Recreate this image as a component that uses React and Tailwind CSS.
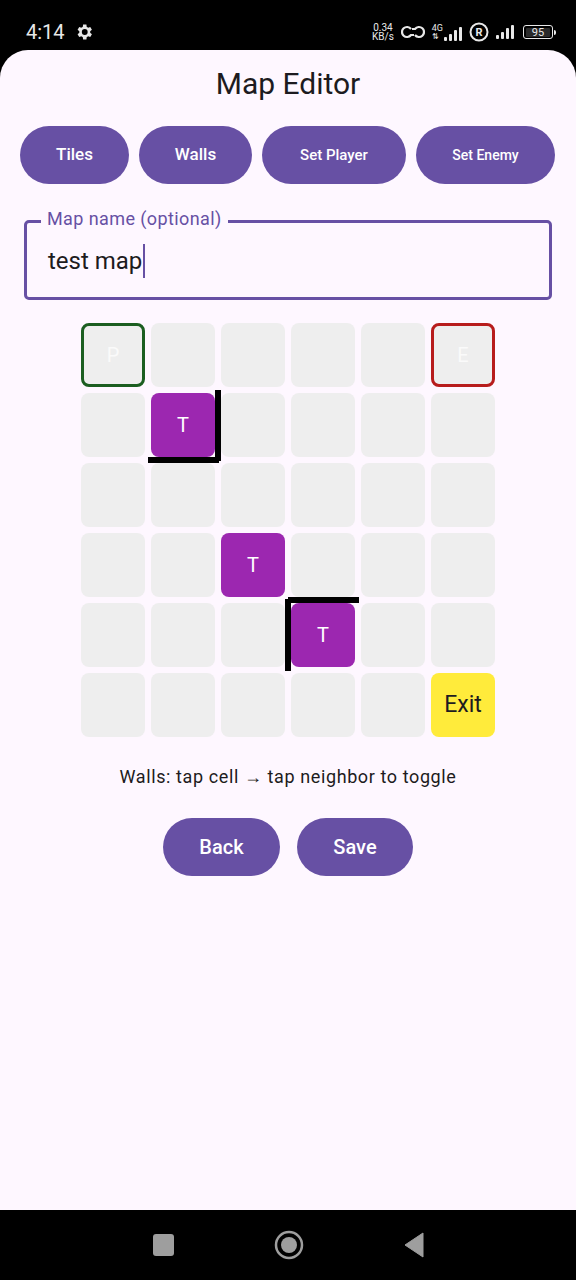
import React from "react";

const ROWS = 6;
const COLS = 6;

const tiles = {
  "0-0": "player",
  "0-5": "enemy",
  "1-1": "trap",
  "3-2": "trap",
  "4-3": "trap",
  "5-5": "exit",
};

// wall bars: left/top in px relative to grid box, 70px step
const walls = [
  { left: 134, top: 67, w: 6, h: 71 },
  { left: 67, top: 134, w: 71, h: 6 },
  { left: 207, top: 274, w: 71, h: 6 },
  { left: 204, top: 276, w: 6, h: 72 },
];

function Cell({ kind }) {
  if (kind === "player")
    return (
      <div className="flex h-16 w-16 items-center justify-center rounded-lg border-[3px] border-[#1b5e20] bg-[#eeeeee] text-[20px] text-[#fafafa]">
        P
      </div>
    );
  if (kind === "enemy")
    return (
      <div className="flex h-16 w-16 items-center justify-center rounded-lg border-[3px] border-[#b71c1c] bg-[#eeeeee] text-[20px] text-[#fafafa]">
        E
      </div>
    );
  if (kind === "trap")
    return (
      <div className="flex h-16 w-16 items-center justify-center rounded-lg bg-[#9c27b0] text-[20px] text-white">
        T
      </div>
    );
  if (kind === "exit")
    return (
      <div className="flex h-16 w-16 items-center justify-center rounded-lg bg-[#ffeb3b] text-[23px] text-[#1d1b20]">
        Exit
      </div>
    );
  return <div className="h-16 w-16 rounded-lg bg-[#eeeeee]" />;
}

function StatusBar() {
  return (
    <div className="flex h-[50px] items-center justify-between bg-black pl-[26px] pr-[20px] pt-[14px] text-[#e8e8e8]">
      <div className="flex items-center gap-[9px]">
        <span className="text-[20px] leading-none">4:14</span>
        <svg width="20" height="20" viewBox="0 0 24 24" fill="#e8e8e8">
          <path d="M19.4 13a7.5 7.5 0 0 0 0-2l2.1-1.6-2-3.5-2.5 1a7.3 7.3 0 0 0-1.7-1L14.9 3h-4l-.4 2.9a7.3 7.3 0 0 0-1.7 1l-2.5-1-2 3.5L6.4 11a7.5 7.5 0 0 0 0 2l-2.1 1.6 2 3.5 2.5-1a7.3 7.3 0 0 0 1.7 1l.4 2.9h4l.4-2.9a7.3 7.3 0 0 0 1.7-1l2.5 1 2-3.5zM12.9 15.5a3.5 3.5 0 1 1 0-7 3.5 3.5 0 0 1 0 7z" />
        </svg>
      </div>
      <div className="flex items-center gap-[7px]">
        <div className="flex flex-col items-center text-[10px] leading-[9px]">
          <span>0.34</span>
          <span>KB/s</span>
        </div>
        <svg width="24" height="16" viewBox="0 0 24 16" fill="none" stroke="#e8e8e8" strokeWidth="2.2">
          <path d="M10 5a5 5 0 1 0 0 6h3" />
          <path d="M14 11a5 5 0 1 0 0-6h-3" />
        </svg>
        <div className="flex items-end gap-[1px]">
          <div className="flex flex-col items-start">
            <span className="text-[9px] leading-[9px]">4G</span>
            <span className="text-[8px] leading-[8px]">⇅</span>
          </div>
          <svg width="18" height="14" viewBox="0 0 18 14" fill="#e8e8e8">
            <rect x="0" y="10" width="3" height="4" rx="1" />
            <rect x="5" y="7" width="3" height="7" rx="1" />
            <rect x="10" y="3" width="3" height="11" rx="1" />
            <rect x="15" y="0" width="3" height="14" rx="1" />
          </svg>
        </div>
        <svg width="20" height="20" viewBox="0 0 20 20" fill="none" stroke="#e8e8e8" strokeWidth="2">
          <circle cx="10" cy="10" r="8.5" />
          <text x="10" y="14" textAnchor="middle" fontSize="11" fontWeight="bold" fill="#e8e8e8" stroke="none" fontFamily="Roboto, sans-serif">R</text>
        </svg>
        <svg width="20" height="14" viewBox="0 0 20 14" fill="#e8e8e8">
          <rect x="0" y="10" width="3" height="4" rx="1" />
          <rect x="5" y="7" width="3" height="7" rx="1" />
          <rect x="10" y="3" width="3" height="11" rx="1" />
          <rect x="15" y="0" width="3" height="14" rx="1" />
        </svg>
        <div className="flex items-center">
          <div className="flex h-[14px] w-[30px] items-center justify-center rounded-[3px] border-[1.5px] border-[#e8e8e8]">
            <div className="flex h-[9px] w-[24px] items-center justify-center rounded-[1px] bg-[#2a2a2a] text-[11px] leading-none">
              95
            </div>
          </div>
          <div className="ml-[1px] h-[5px] w-[2px] rounded-r bg-[#e8e8e8]" />
        </div>
      </div>
    </div>
  );
}

export default function App() {
  return (
    <div className="flex h-[1280px] w-[576px] flex-col bg-black font-['Roboto',sans-serif] text-[#1d1b20]">
      <StatusBar />
      <div className="flex flex-1 flex-col items-center rounded-t-[28px] bg-[#fef7ff]">
        <h1 className="mt-[15px] text-[30px] leading-[38px]">Map Editor</h1>

        <div className="mt-[23px] flex w-full gap-[10px] px-[20px]">
          <button className="h-[58px] w-[109px] rounded-full bg-[#6750a4] text-[17px] font-medium text-white">Tiles</button>
          <button className="h-[58px] w-[113px] rounded-full bg-[#6750a4] text-[17px] font-medium text-white">Walls</button>
          <button className="h-[58px] w-[144px] rounded-full bg-[#6750a4] text-[15px] font-medium text-white">Set Player</button>
          <button className="h-[58px] w-[139px] rounded-full bg-[#6750a4] text-[14px] font-medium text-white">Set Enemy</button>
        </div>

        <div className="relative mt-[36px] w-[528px]">
          <div className="flex h-[80px] items-center rounded-[5px] border-[3px] border-[#6750a4] pl-[21px] pt-[2px]">
            <span className="text-[24px] leading-none">test map</span>
            <span className="ml-[1px] h-[34px] w-[2px] bg-[#6750a4]" />
          </div>
          <span className="absolute left-[17px] top-[-12px] bg-[#fef7ff] px-[6px] text-[18px] leading-[22px] tracking-[0.4px] text-[#6750a4]">
            Map name (optional)
          </span>
        </div>

        <div className="relative mt-[23px] grid grid-cols-6 gap-[6px]">
          {Array.from({ length: ROWS * COLS }).map((_, i) => {
            const r = Math.floor(i / COLS);
            const c = i % COLS;
            return <Cell key={i} kind={tiles[`${r}-${c}`]} />;
          })}
          {walls.map((w, i) => (
            <div
              key={i}
              className="absolute bg-black"
              style={{ left: w.left, top: w.top, width: w.w, height: w.h }}
            />
          ))}
        </div>

        <p className="mt-[29px] text-[18px] leading-[22px] tracking-[0.6px]">
          Walls: tap cell → tap neighbor to toggle
        </p>

        <div className="mt-[30px] flex gap-[17px]">
          <button className="h-[58px] w-[117px] rounded-full bg-[#6750a4] text-[20px] font-medium text-white">Back</button>
          <button className="h-[58px] w-[116px] rounded-full bg-[#6750a4] text-[20px] font-medium text-white">Save</button>
        </div>
      </div>
      <div className="flex h-[70px] items-center justify-center bg-black">
        <div className="flex items-center gap-[100px]">
          <div className="h-[22px] w-[21px] rounded-[3px] bg-[#9e9e9e]" />
          <svg width="30" height="30" viewBox="0 0 30 30">
            <circle cx="15" cy="15" r="13" fill="none" stroke="#9e9e9e" strokeWidth="2.5" />
            <circle cx="15" cy="15" r="8" fill="#9e9e9e" />
          </svg>
          <svg width="20" height="26" viewBox="0 0 20 26">
            <path d="M19 1 L19 25 L1 13 Z" fill="#9e9e9e" strokeLinejoin="round" stroke="#9e9e9e" strokeWidth="1" />
          </svg>
        </div>
      </div>
    </div>
  );
}
